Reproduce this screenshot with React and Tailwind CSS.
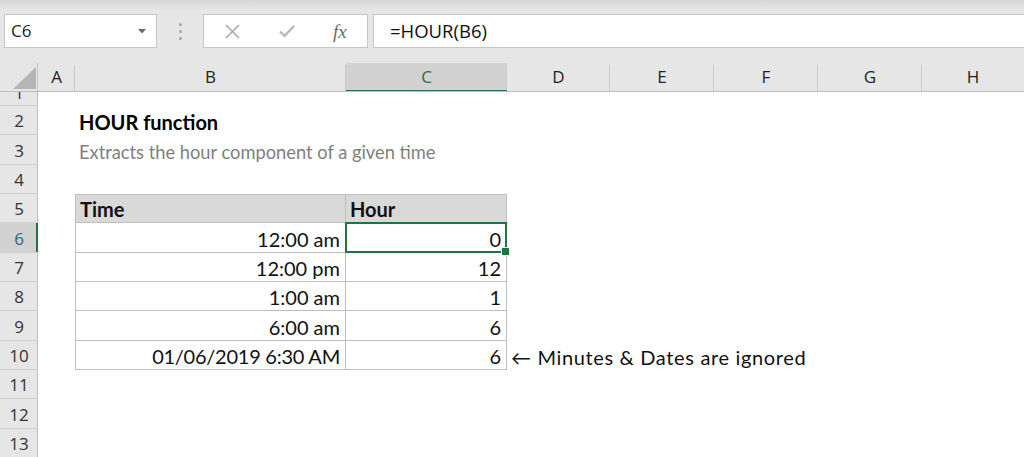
import React from "react";

const COLS = [
  { k: "A", w: 37 },
  { k: "B", w: 271 },
  { k: "C", w: 161 },
  { k: "D", w: 103 },
  { k: "E", w: 104 },
  { k: "F", w: 104 },
  { k: "G", w: 104 },
  { k: "H", w: 102, last: true },
];

const HEIGHTS = [14, 29, 30, 29, 29, 30, 29, 29, 30, 29, 29, 30, 29];

const cellFont = { fontFamily: "Lato, 'DejaVu Sans', sans-serif" };
const uiFont = { fontFamily: "'Open Sans', 'Noto Sans', sans-serif" };

const DATA = {
  2: { B: { t: "HOUR function", cls: "font-bold text-black" } },
  3: {
    B: {
      t: "Extracts the hour component of a given time",
      cls: "text-[#7f7f7f] text-[18.3px]",
    },
  },
  5: { B: { t: "Time", cls: "font-bold" }, C: { t: "Hour", cls: "font-bold" } },
  6: { B: { t: "12:00 am", r: true }, C: { t: "0", r: true } },
  7: { B: { t: "12:00 pm", r: true }, C: { t: "12", r: true } },
  8: { B: { t: "1:00 am", r: true }, C: { t: "1", r: true } },
  9: { B: { t: "6:00 am", r: true }, C: { t: "6", r: true } },
  10: {
    B: { t: "01/06/2019 6:30 AM", r: true, cls: "tracking-[-0.25px]" },
    C: { t: "6", r: true },
    D: { t: "\u2190 Minutes & Dates are ignored", cls: "tracking-[0.65px]" },
  },
};

function Cell({ row, col }) {
  const d = DATA[row] && DATA[row][col.k];
  const inTable = row >= 5 && row <= 10 && (col.k === "B" || col.k === "C");
  let border = "";
  if (inTable) {
    border = "border-b border-r border-[#bfbfbf]";
    if (col.k === "B") border += " border-l";
    if (row === 5) border += " border-t";
  }
  const bg = inTable && row === 5 ? "bg-[#d9d9d9]" : "";
  const active = row === 6 && col.k === "C";
  return (
    <div
      className={`relative shrink-0 h-full flex items-end pb-[2px] text-[20px] leading-[22px] text-[#111] whitespace-nowrap ${border} ${bg} ${
        d && d.r ? "justify-end pr-[5px]" : "pl-[4px]"
      } ${active ? "z-10" : ""}`}
      style={{ width: col.w, ...cellFont }}
    >
      {d ? <span className={d.cls || ""}>{d.t}</span> : null}
      {active ? (
        <>
          <div className="absolute -left-[1px] -top-[1px] -right-[1px] -bottom-[1px] border-2 border-[#217346] pointer-events-none" />
          <div className="absolute -right-[4px] -bottom-[4px] w-[9px] h-[9px] bg-[#217346] border border-white" />
        </>
      ) : null}
    </div>
  );
}

function Toolbar() {
  return (
    <div className="h-[63px] bg-[linear-gradient(#d6d6d6,#e6e6e6_10px)] flex items-start pt-[14px] overflow-hidden">
      <div
        className="ml-[4px] w-[153px] h-[34px] shrink-0 bg-white border border-[#c6c6c6] flex items-center justify-between pl-[6px] pr-[10px] text-[17px] text-[#222]"
        style={uiFont}
      >
        <span>C6</span>
        <svg width="8" height="5" viewBox="0 0 8 5">
          <path d="M0 0 H8 L4 4.5 Z" fill="#6b6b6b" />
        </svg>
      </div>
      <div className="w-[46px] h-[34px] shrink-0 flex flex-col items-center justify-center gap-[4px]">
        <span className="w-[3px] h-[3px] rounded-full bg-[#a3a3a3]" />
        <span className="w-[3px] h-[3px] rounded-full bg-[#a3a3a3]" />
        <span className="w-[3px] h-[3px] rounded-full bg-[#a3a3a3]" />
      </div>
      <div className="w-[165px] h-[34px] shrink-0 bg-white border border-[#c6c6c6] flex items-center">
        <svg className="ml-[21px]" width="15" height="15" viewBox="0 0 15 15">
          <path d="M1 1 L14 14 M14 1 L1 14" stroke="#a9a9a9" strokeWidth="1.6" fill="none" />
        </svg>
        <svg className="ml-[39px]" width="16" height="14" viewBox="0 0 16 14">
          <path d="M1 7.5 L5.5 12 L15 2" stroke="#b3b3b3" strokeWidth="2.2" fill="none" />
        </svg>
        <span
          className="ml-[38px] text-[19px] italic text-[#6a6a6a] leading-none"
          style={{ fontFamily: "'Liberation Serif', 'DejaVu Serif', serif" }}
        >
          fx
        </span>
      </div>
      <div
        className="ml-[5px] flex-1 -mr-[2px] h-[34px] bg-white border border-[#c6c6c6] flex items-center pl-[16px] text-[18.5px] text-[#111]"
        style={uiFont}
      >
        =HOUR(B6)
      </div>
    </div>
  );
}

function ColumnHeader() {
  return (
    <div className="h-[29px] flex bg-[#e6e6e6] border-b border-[#bdbdbd] overflow-hidden" style={uiFont}>
      <div className="w-[38px] shrink-0 h-full relative border-r border-[#c6c6c6]">
        <svg className="absolute left-[13px] top-[4px]" width="23" height="22" viewBox="0 0 23 22">
          <path d="M23 0 V22 H0 Z" fill="#b5b5b5" />
        </svg>
      </div>
      {COLS.map((c) => {
        const sel = c.k === "C";
        return (
          <div
            key={c.k}
            className={`shrink-0 h-full relative flex items-center justify-center text-[17px] ${
              sel ? "bg-[#d2d2d2] text-[#217346]" : "text-[#222]"
            }`}
            style={{ width: c.w }}
          >
            <span className="-mt-[1px]">{c.k}</span>
            {c.last ? null : <div className="absolute right-0 top-[2px] bottom-0 w-px bg-[#c9c9c9]" />}
            {sel ? <div className="absolute left-0 right-0 -bottom-px h-[2px] bg-[#217346]" /> : null}
          </div>
        );
      })}
    </div>
  );
}

function RowHeader({ n }) {
  const sel = n === 6;
  const inner = (
    <div
      className={`h-full w-full flex items-center justify-center pt-[2px] text-[17px] ${
        sel ? "text-[#2e6b67]" : "text-[#333]"
      }`}
      style={uiFont}
    >
      {n}
    </div>
  );
  return (
    <div
      className={`w-[38px] shrink-0 h-full relative overflow-hidden border-b border-[#d0d0d0] ${
        sel ? "bg-[#d2d2d2]" : "bg-[#e6e6e6]"
      }`}
    >
      {n === 1 ? <div className="h-[29px] -mt-[15px]">{inner}</div> : inner}
      <div className={`absolute top-0 bottom-0 right-0 ${sel ? "w-[2px] bg-[#217346]" : "w-px bg-[#bdbdbd]"}`} />
    </div>
  );
}

export default function App() {
  return (
    <div className="w-[1024px] h-[457px] overflow-hidden bg-white">
      <Toolbar />
      <ColumnHeader />
      <div className="flex flex-col">
        {HEIGHTS.map((h, i) => {
          const n = i + 1;
          return (
            <div key={n} className="flex shrink-0" style={{ height: h }}>
              <RowHeader n={n} />
              {n === 1 ? null : COLS.map((c) => <Cell key={c.k} row={n} col={c} />)}
            </div>
          );
        })}
      </div>
    </div>
  );
}
